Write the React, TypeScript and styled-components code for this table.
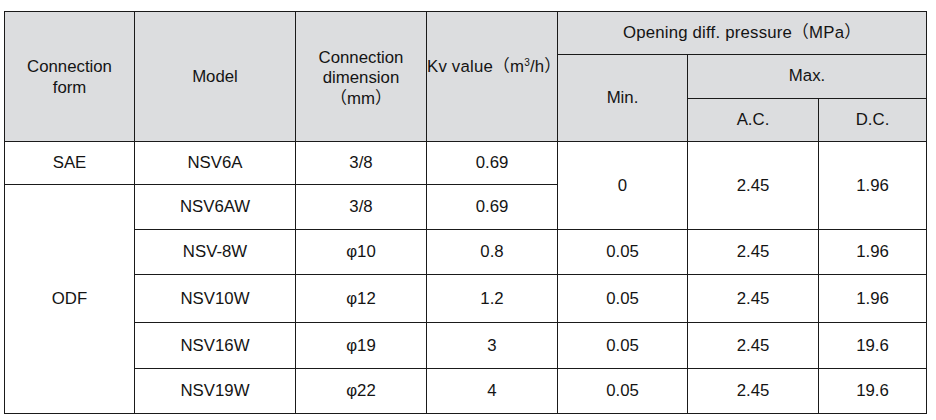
import React from "react"
import styled, { createGlobalStyle } from "styled-components"

const GlobalStyle = createGlobalStyle`
  html, body {
    margin: 0;
    padding: 0;
    background: #ffffff;
  }
  body {
    font-family: "Liberation Sans", Arial, "Noto Sans CJK SC", sans-serif;
    color: #141414;
  }
`

type Row = {
  form?: { text: string; span: number }
  model: string
  dim: string
  kv: string
  min?: { text: string; span: number }
  ac: string
  dc: string
  height: number
}

const rows: Row[] = [
  { form: { text: "SAE", span: 1 }, model: "NSV6A", dim: "3/8", kv: "0.69", min: { text: "0", span: 2 }, ac: "2.45", dc: "1.96", height: 43 },
  { form: { text: "ODF", span: 5 }, model: "NSV6AW", dim: "3/8", kv: "0.69", ac: "", dc: "", height: 45 },
  { model: "NSV-8W", dim: "φ10", kv: "0.8", min: { text: "0.05", span: 1 }, ac: "2.45", dc: "1.96", height: 45 },
  { model: "NSV10W", dim: "φ12", kv: "1.2", min: { text: "0.05", span: 1 }, ac: "2.45", dc: "1.96", height: 48 },
  { model: "NSV16W", dim: "φ19", kv: "3", min: { text: "0.05", span: 1 }, ac: "2.45", dc: "19.6", height: 46 },
  { model: "NSV19W", dim: "φ22", kv: "4", min: { text: "0.05", span: 1 }, ac: "2.45", dc: "19.6", height: 45 },
]

const colWidths = [130, 161, 131, 131, 130, 131, 108]

export default function App() {
  return (
    <>
      <GlobalStyle />
      <Page>
        <Table>
          <colgroup>
            {colWidths.map((w, i) => (
              <col key={i} style={{ width: w }} />
            ))}
          </colgroup>
          <thead>
            <HeadRow $h={43}>
              <HeadCell rowSpan={3} $shift={2}>
                Connection
                <br />
                form
              </HeadCell>
              <HeadCell rowSpan={3} $shift={2}>Model</HeadCell>
              <HeadCell rowSpan={3} $shift={4}>
                Connection
                <br />
                dimension
                <br />（mm）
              </HeadCell>
              <HeadCell rowSpan={3} $tight $shift={-18}>
                Kv value（m<Sup>3</Sup>/h）
              </HeadCell>
              <HeadCell colSpan={3} $tight>Opening diff. pressure（MPa）</HeadCell>
            </HeadRow>
            <HeadRow $h={44}>
              <HeadCell rowSpan={2} $shift={1}>Min.</HeadCell>
              <HeadCell colSpan={2}>Max.</HeadCell>
            </HeadRow>
            <HeadRow $h={43}>
              <HeadCell>A.C.</HeadCell>
              <HeadCell>D.C.</HeadCell>
            </HeadRow>
          </thead>
          <tbody>
            {rows.map((r, i) => (
              <BodyRow key={i} $h={r.height}>
                {r.form && <Cell rowSpan={r.form.span}>{r.form.text}</Cell>}
                <Cell>{r.model}</Cell>
                <Cell>{r.dim}</Cell>
                <Cell>{r.kv}</Cell>
                {r.min && <Cell rowSpan={r.min.span}>{r.min.text}</Cell>}
                {i === 0 && <Cell rowSpan={2}>{r.ac}</Cell>}
                {i === 0 && <Cell rowSpan={2}>{r.dc}</Cell>}
                {i > 1 && <Cell>{r.ac}</Cell>}
                {i > 1 && <Cell>{r.dc}</Cell>}
              </BodyRow>
            ))}
          </tbody>
        </Table>
      </Page>
    </>
  )
}

const Page = styled.div`
  padding: 11px 0 0 4px;
`

const Table = styled.table`
  border-collapse: collapse;
  table-layout: fixed;
  width: 922px;
  font-size: 16.8px;
  line-height: 20.5px;
`

const HeadRow = styled.tr<{ $h: number }>`
  height: ${(p) => p.$h}px;
`

const BodyRow = styled.tr<{ $h: number }>`
  height: ${(p) => p.$h}px;
`

// $shift moves the label down (positive) or up (negative) inside its cell
const HeadCell = styled.th<{ $tight?: boolean; $shift?: number }>`
  background-color: #dcdddf;
  border: 1px solid #1a1a1a;
  font-weight: normal;
  text-align: center;
  vertical-align: middle;
  padding: ${(p) => {
    const s = p.$shift || 0
    const side = p.$tight ? 0 : 2
    return `${s > 0 ? s : 0}px ${side}px ${s < 0 ? -s : 0}px`
  }};
  white-space: ${(p) => (p.$tight ? "nowrap" : "normal")};
  letter-spacing: ${(p) => (p.$tight ? "0.2px" : "0")};
`

const Cell = styled.td`
  border: 1px solid #1a1a1a;
  text-align: center;
  vertical-align: middle;
  padding: 1px 2px 0;
`

const Sup = styled.sup`
  font-size: 10px;
  line-height: 0;
  vertical-align: 0.6em;
`
